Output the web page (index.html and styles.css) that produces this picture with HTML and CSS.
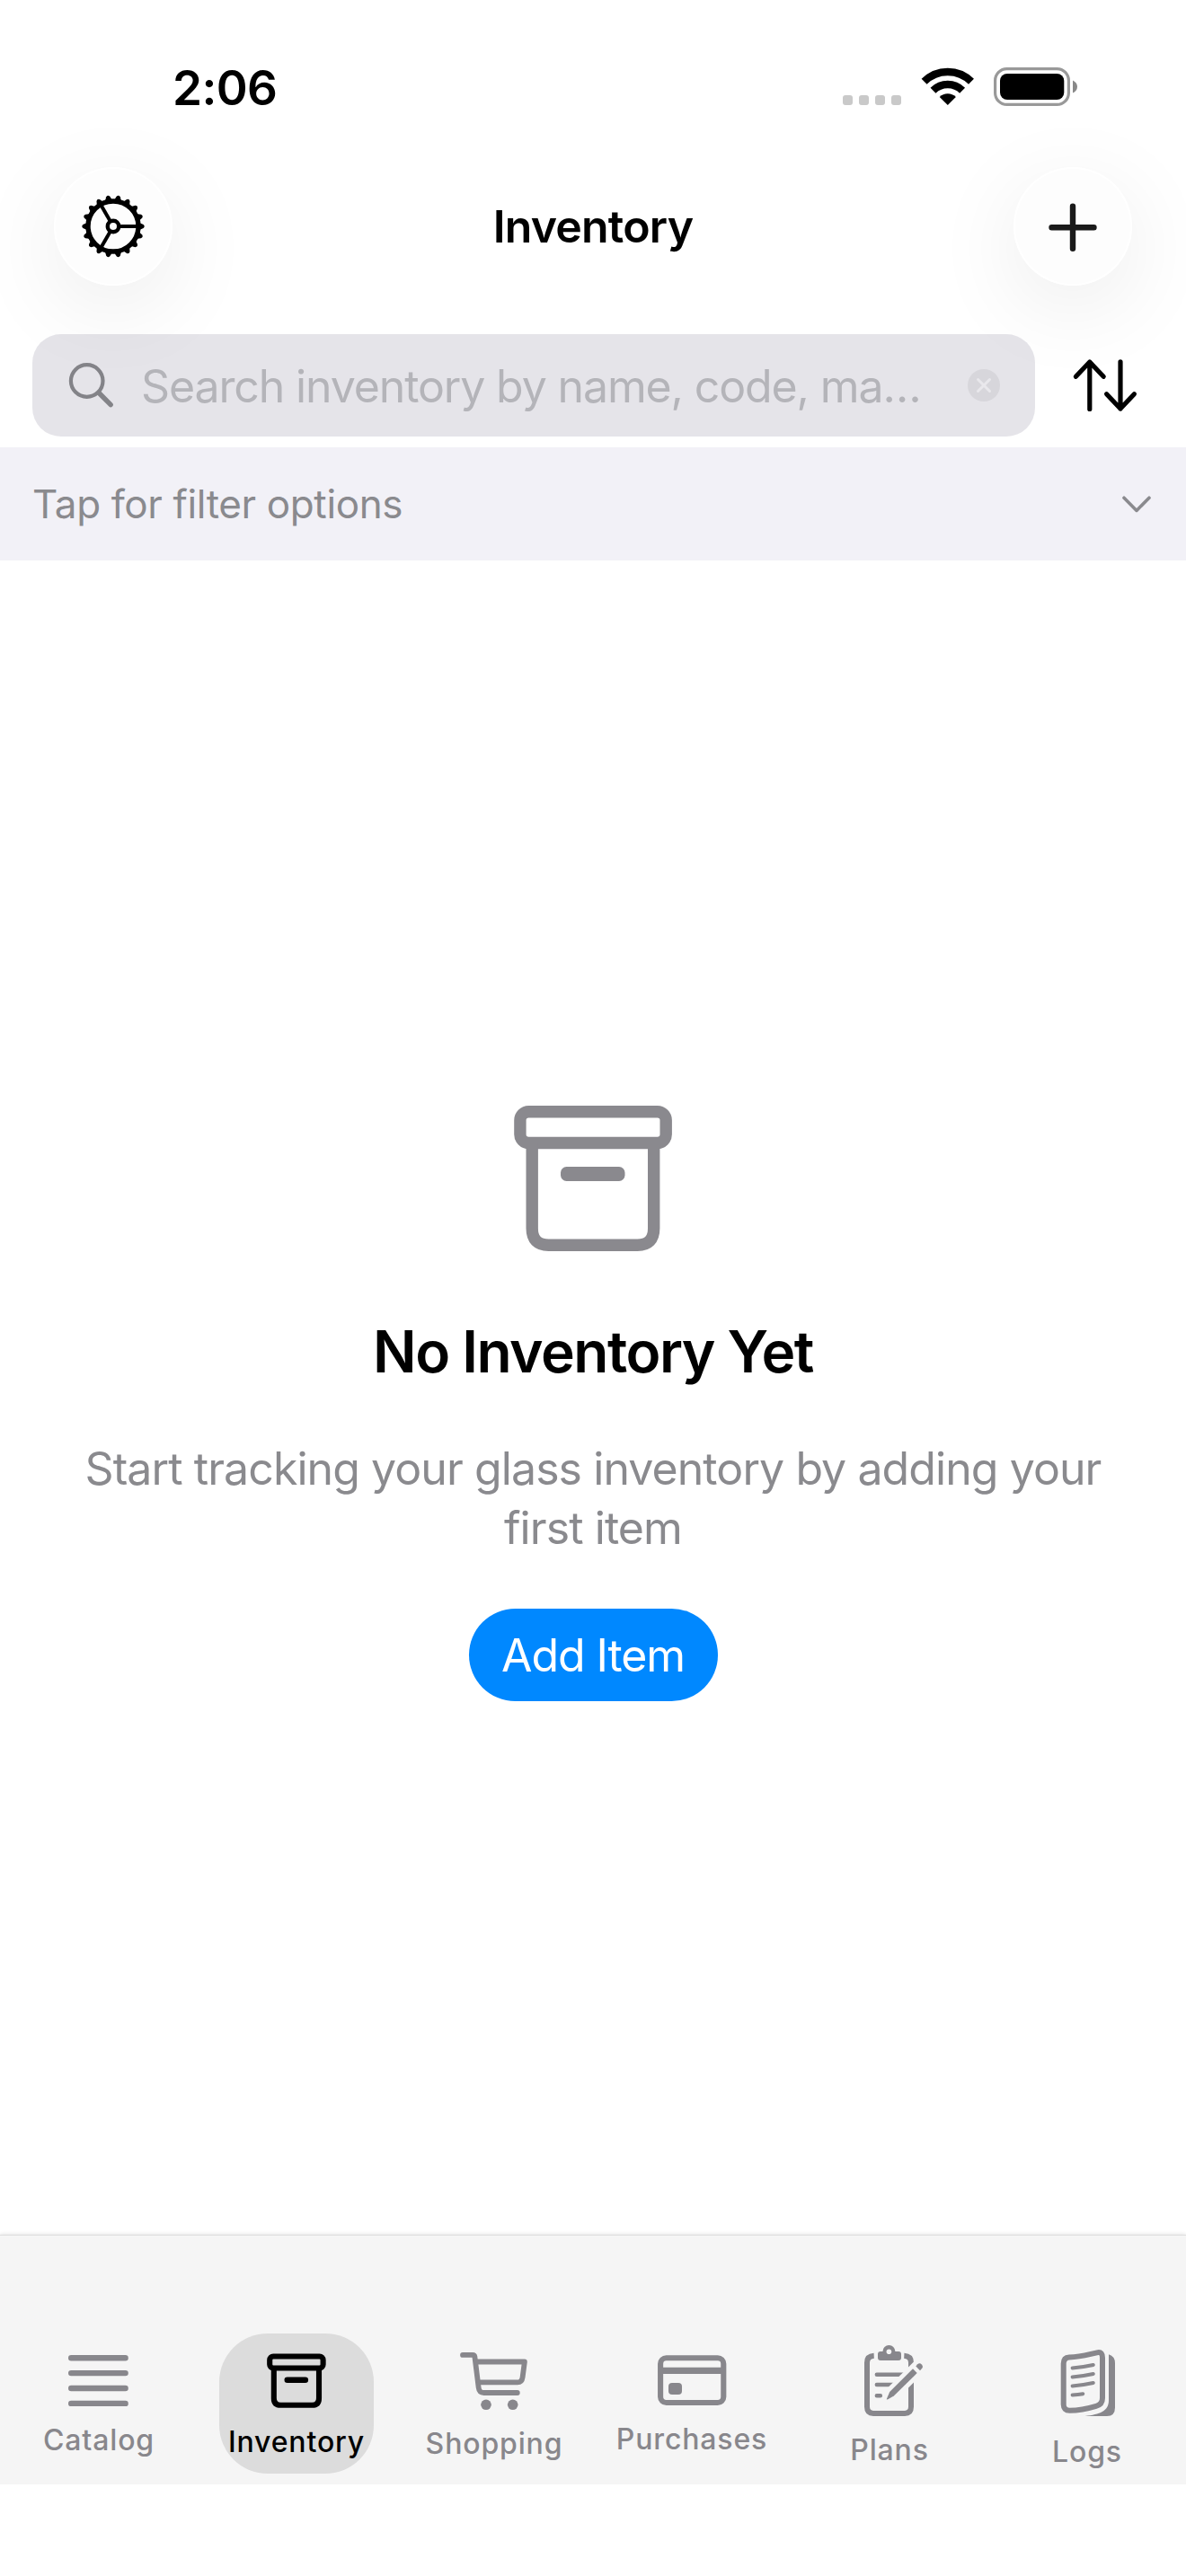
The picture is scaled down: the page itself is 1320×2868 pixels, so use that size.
FILE: index.html
```html
<!DOCTYPE html>
<html lang="en">
<head>
<meta charset="utf-8">
<title>Inventory</title>
<link rel="stylesheet" href="styles.css">
</head>
<body>
<div class="screen">
  <div class="status">
    <span class="time">2:06</span>
    <div class="indicators">
      <svg width="66" height="43" viewBox="0 0 66 43" fill="#c9c9c9"><rect y="31" width="11" height="11" rx="3"/><rect x="18" y="31" width="11" height="11" rx="3"/><rect x="36" y="31" width="11" height="11" rx="3"/><rect x="54" y="31" width="11" height="11" rx="3"/></svg>
      <svg width="58" height="43" viewBox="0 0 58 43"><g fill="none" stroke="#000" stroke-width="8.4"><path d="M2.6 15.8A37.1 37.1 0 0 1 55 15.8"/><path d="M12.5 25.7A23 23 0 0 1 45.1 25.7"/></g><path d="M28.8 42L19.75 33A12.8 12.8 0 0 1 37.85 33Z"/></svg>
      <svg width="93" height="43" viewBox="0 0 93 43"><rect x="1.6" y="1.6" width="81.8" height="39.8" rx="13" fill="none" stroke="#999" stroke-width="3.2"/><rect x="7" y="7" width="71.3" height="29" rx="8"/><path d="M88 14.5Q93 17 93 21.5T88 28.5Z" fill="#888"/></svg>
    </div>
  </div>

  <header class="nav">
    <button class="round" aria-label="Settings">
      <svg width="72" height="72" viewBox="-36 -36 72 72">
        <defs>
          <path id="tooth" d="M28 -4.6L33.6 -2Q35.8 0 33.6 2L28 4.6Z"/>
          <path id="spoke" d="M6 0H27" stroke="#000" stroke-width="4"/>
        </defs>
        <circle r="28" fill="none" stroke="#000" stroke-width="5.4"/>
        <circle r="6.2" fill="none" stroke="#000" stroke-width="4.4"/>
        <use href="#spoke"/><use href="#spoke" transform="rotate(120)"/><use href="#spoke" transform="rotate(240)"/>
        <use href="#tooth"/><use href="#tooth" transform="rotate(20)"/><use href="#tooth" transform="rotate(40)"/><use href="#tooth" transform="rotate(60)"/><use href="#tooth" transform="rotate(80)"/><use href="#tooth" transform="rotate(100)"/><use href="#tooth" transform="rotate(120)"/><use href="#tooth" transform="rotate(140)"/><use href="#tooth" transform="rotate(160)"/><use href="#tooth" transform="rotate(180)"/><use href="#tooth" transform="rotate(200)"/><use href="#tooth" transform="rotate(220)"/><use href="#tooth" transform="rotate(240)"/><use href="#tooth" transform="rotate(260)"/><use href="#tooth" transform="rotate(280)"/><use href="#tooth" transform="rotate(300)"/><use href="#tooth" transform="rotate(320)"/><use href="#tooth" transform="rotate(340)"/>
      </svg>
    </button>
    <h1 class="title">Inventory</h1>
    <button class="round" aria-label="Add">
      <svg width="60" height="60" viewBox="-30 -31.3 60 60" stroke="#1a1a1a" stroke-width="6.4" stroke-linecap="round"><path d="M-23.5 0H23.5M0 -23.5V23.5"/></svg>
    </button>
  </header>

  <div class="search-row">
    <div class="field">
      <svg width="50" height="50" viewBox="0 0 50 50" fill="none" stroke="#838388" stroke-linecap="round"><circle cx="19.7" cy="20" r="17.8" stroke-width="4.2"/><path d="M33.2 33.5L46.2 46.6" stroke-width="5.4"/></svg>
      <span class="placeholder">Search inventory by name, code, ma…</span>
      <svg width="36" height="36" viewBox="0 0 36 36"><circle cx="18" cy="18" r="18" fill="#d7d6db"/><path d="M11.5 11.5L24.5 24.5M24.5 11.5L11.5 24.5" stroke="#e9e8ec" stroke-width="3" stroke-linecap="round"/></svg>
    </div>
    <svg class="sort" width="72" height="60" viewBox="0 0 72 60" fill="none" stroke="#000" stroke-width="5.2" stroke-linecap="round" stroke-linejoin="round"><path d="M18.8 56.5V4M3.4 20.3L18.8 4L34.2 20.3M53 3.8V56M37.6 39.7L53 56L68.4 39.7"/></svg>
  </div>

  <div class="filter">
    <span>Tap for filter options</span>
    <svg width="34" height="22" viewBox="0 0 34 22" fill="none" stroke="#8a8a8e" stroke-width="3.6" stroke-linecap="round" stroke-linejoin="round"><path d="M3 4.2L17 18.4L31 4.2"/></svg>
  </div>

  <main class="empty">
    <svg width="176" height="162" viewBox="0 0 176 162"><g fill="none" stroke="#8a898e" stroke-width="13.4"><rect x="6.9" y="6.7" width="162.3" height="34.8" rx="9.5"/><path d="M20.2 42V136.5Q20.2 155.2 38.5 155.2H137.5Q155.7 155.2 155.7 136.5V42"/></g><rect x="52" y="68" width="71.5" height="16" rx="6.5" fill="#8a898e"/></svg>
    <h2>No Inventory Yet</h2>
    <p>Start tracking your glass inventory by adding your first item</p>
    <button class="add">Add Item</button>
  </main>

  <nav class="tabs">
    <div class="tab">
      <svg width="80" height="57" viewBox="0 0 80 57" stroke="currentColor" stroke-width="6.4" stroke-linecap="round"><path d="M9.2 3.2H69.6M9.2 20.1H69.6M9.2 37H69.6M9.2 53.9H69.6"/></svg>
      <span>Catalog</span>
    </div>
    <div class="tab active">
      <svg width="80" height="61" viewBox="0 0 80 61" fill="none" stroke="currentColor" stroke-width="6.1"><rect x="10.2" y="3.5" width="59.4" height="13" rx="4"/><path d="M14.8 18V50Q14.8 57.8 22.3 57.8H57.5Q65 57.8 65 50V18"/><path d="M29.8 29.8H49.8" stroke-width="6.6" stroke-linecap="round"/></svg>
      <span>Inventory</span>
    </div>
    <div class="tab">
      <svg width="80" height="65" viewBox="0 0 80 65"><g fill="none" stroke="currentColor" stroke-width="5.8" stroke-linecap="round" stroke-linejoin="round"><path d="M5 3.9H16.2Q18.1 3.9 18.4 6L22.7 40.5Q23.4 46 28.5 46H65.8"/><path d="M20 11.5H73.9L71.6 28.8Q70.8 34.4 66 34.4H24"/></g><circle cx="31" cy="59.3" r="5.8" fill="currentColor"/><circle cx="60.7" cy="59.3" r="5.8" fill="currentColor"/></svg>
      <span>Shopping</span>
    </div>
    <div class="tab">
      <svg width="80" height="55" viewBox="0 0 80 55"><rect x="5.1" y="2.3" width="70.2" height="49.7" rx="6.5" fill="none" stroke="currentColor" stroke-width="6.1"/><path d="M5 12.7H75V20H5Z" fill="currentColor"/><rect x="14" y="30" width="15" height="13" rx="4" fill="currentColor"/></svg>
      <span>Purchases</span>
    </div>
    <div class="tab">
      <svg width="80" height="79" viewBox="0 0 80 79"><g fill="none" stroke="currentColor" stroke-width="6"><path d="M22.7 11.8Q15 12.2 15 19.5V68.5Q15 75.9 22 75.9H57Q64 75.9 64 68.5V19.5Q64 12.2 56.3 11.8"/><path d="M25.8 32.7H56M25.8 44H46M25.8 56.3H29.9" stroke-width="4.4" stroke-linecap="round"/></g><path d="M43 54L80 17" stroke="#f5f5f5" stroke-width="16.4"/><path d="M36.7 60.3L40.2 52L66 26.3L70.7 31L44.8 56.6L37.8 60.6Z" fill="currentColor"/><path d="M69.3 23.4L71.2 21.3Q73.5 19.3 75.8 21.4Q78 23.8 76 26L74 28.2Z" fill="currentColor"/><rect x="27" y="7" width="26" height="10" rx="3" fill="currentColor"/><circle cx="39.4" cy="6.8" r="6.9" fill="currentColor"/><circle cx="39.4" cy="7.2" r="2.8" fill="#f5f5f5"/></svg>
      <span>Plans</span>
    </div>
    <div class="tab">
      <svg width="80" height="83" viewBox="0 0 80 83"><g fill="none" stroke="currentColor" stroke-width="6"><path d="M13.7 22.5Q13.7 15.8 20 15.4C34 14.8 42 12 52 10.1Q57 9.4 57 16V61Q57 68 50 69.8C40 72.8 32 74.6 20.5 74.8Q13.7 74.8 13.7 68Z"/><path d="M23.6 27.4Q35 26.6 46.8 24M23.6 37.4Q35 36.6 46.8 34M23.6 47.4Q35 46.6 46.8 44M23.6 57.4Q30 57.1 35.3 56.2" stroke-width="4" stroke-linecap="round"/></g><path d="M64 12.3Q71 14.5 71 22V71.5Q71 81 62 81H37.7C54 79 64 75.5 64 63.5Z" fill="currentColor"/></svg>
      <span>Logs</span>
    </div>
  </nav>
</div>
</body>
</html>
```
FILE: styles.css
```css
* { box-sizing: border-box; }

body {
  margin: 0;
  background: #fff;
  color: #000;
  font-family: Inter, "Liberation Sans", sans-serif;
}

svg { display: block; flex: none; overflow: visible; }

button { border: 0; padding: 0; font: inherit; }

h1, h2, p { margin: 0; }

.screen {
  display: flex;
  flex-direction: column;
  width: 1320px;
  height: 2868px;
  overflow: hidden;
  background: #fff;
}

.status {
  display: flex;
  align-items: center;
  justify-content: space-between;
  height: 186px;
  padding: 8px 121px 0 192px;
}

.time { padding-top: 1px; font-size: 53px; font-weight: 600; letter-spacing: -0.6px; }

.indicators { display: flex; gap: 22px; margin-top: -1px; }

.nav {
  display: flex;
  align-items: center;
  justify-content: space-between;
  height: 132px;
  padding: 0 60px;
}

.title { font-size: 50px; font-weight: 600; letter-spacing: -0.8px; }

.round {
  display: flex;
  align-items: center;
  justify-content: center;
  width: 132px;
  height: 132px;
  border-radius: 50%;
  background: #fdfdfd;
  box-shadow: inset 0 0 0 2px #fff, 0 24px 100px rgba(0, 0, 0, 0.08);
}

.search-row {
  display: flex;
  align-items: center;
  justify-content: space-between;
  height: 114px;
  margin-top: 54px;
  padding: 0 54px 0 36px;
}

.field {
  display: flex;
  align-items: center;
  width: 1116px;
  height: 114px;
  padding: 0 39px 0 41px;
  border-radius: 32px;
  background: rgba(120, 117, 142, 0.195);
}

.placeholder {
  flex: 1;
  margin-left: 30px;
  padding-top: 1px;
  color: #b4b4b9;
  font-size: 50px;
  letter-spacing: -1.13px;
  white-space: nowrap;
}

.filter {
  display: flex;
  align-items: center;
  justify-content: space-between;
  height: 126px;
  margin-top: 12px;
  padding: 0 38px 0 36px;
  background: #f2f1f7;
  color: #8a8a8e;
  font-size: 44px;
  letter-spacing: -0.37px;
}

.empty {
  display: flex;
  flex: 1;
  flex-direction: column;
  align-items: center;
  padding-top: 607px;
}

.empty h2 {
  margin-top: 73px;
  font-size: 64px;
  font-weight: 600;
  line-height: 78px;
  letter-spacing: -1.5px;
}

.empty p {
  width: 1176px;
  margin-top: 58px;
  color: #8a8a8e;
  font-size: 50px;
  line-height: 66px;
  letter-spacing: -0.92px;
  text-align: center;
}

.add {
  width: 277px;
  height: 103px;
  margin-top: 57px;
  border-radius: 52px;
  background: #0088ff;
  color: #fff;
  font-size: 50px;
  letter-spacing: -1.1px;
}

.tabs {
  display: grid;
  grid-template-columns: repeat(6, 220px);
  justify-items: center;
  height: 277px;
  margin-bottom: 102px;
  padding-top: 109px;
  background: #f5f5f5;
  box-shadow: 0 -1px 0 #dedede, 0 -2px 4px rgba(0, 0, 0, 0.1);
  clip-path: inset(-10px 0 0 0);
}

.tab {
  display: flex;
  flex-direction: column;
  align-items: center;
  justify-content: center;
  gap: 18px;
  width: 172px;
  height: 156px;
  padding-top: 7px;
  border-radius: 54px;
  color: #88878c;
  font-size: 32px;
  font-weight: 500;
  line-height: 40px;
  letter-spacing: 0.85px;
}

.active { background: #dcdcdc; color: #000; }
```
